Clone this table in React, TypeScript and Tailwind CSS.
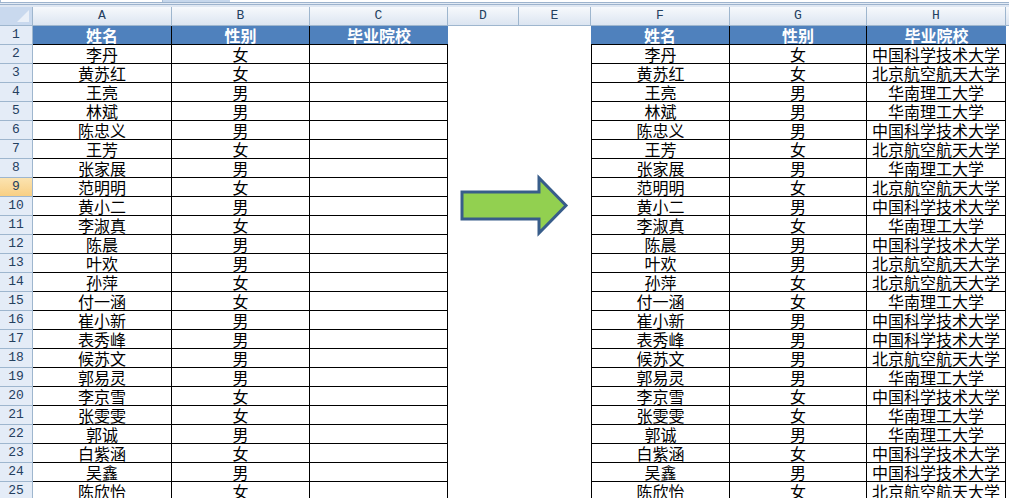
import React from 'react';

const rows: [string, string, string][] = [
  ['李丹', '女', '中国科学技术大学'],
  ['黄苏红', '女', '北京航空航天大学'],
  ['王亮', '男', '华南理工大学'],
  ['林斌', '男', '华南理工大学'],
  ['陈忠义', '男', '中国科学技术大学'],
  ['王芳', '女', '北京航空航天大学'],
  ['张家展', '男', '华南理工大学'],
  ['范明明', '女', '北京航空航天大学'],
  ['黄小二', '男', '中国科学技术大学'],
  ['李淑真', '女', '华南理工大学'],
  ['陈晨', '男', '中国科学技术大学'],
  ['叶欢', '男', '北京航空航天大学'],
  ['孙萍', '女', '北京航空航天大学'],
  ['付一涵', '女', '华南理工大学'],
  ['崔小新', '男', '中国科学技术大学'],
  ['表秀峰', '男', '中国科学技术大学'],
  ['候苏文', '男', '北京航空航天大学'],
  ['郭易灵', '男', '华南理工大学'],
  ['李京雪', '女', '中国科学技术大学'],
  ['张雯雯', '女', '华南理工大学'],
  ['郭诚', '男', '华南理工大学'],
  ['白紫涵', '女', '中国科学技术大学'],
  ['吴鑫', '男', '中国科学技术大学'],
  ['陈欣怡', '女', '北京航空航天大学'],
];

// column letters with their pixel widths
const cols: [string, number][] = [
  ['A', 139], ['B', 138], ['C', 138], ['D', 71], ['E', 72],
  ['F', 139], ['G', 137], ['H', 139],
];

const cjk = "font-['Noto_Sans_CJK_SC',sans-serif]";
const mono = "font-['Liberation_Mono',monospace]";

const RowHead: React.FC<{ n: number }> = ({ n }) => (
  <div
    className={`w-[33px] shrink-0 h-full flex items-center justify-center border-r border-b border-[#9eb6ce] text-[13px] leading-[18px] font-normal text-[#24405f] ${mono} ${
      n === 9 ? 'bg-linear-to-b from-[#fbe3b0] to-[#f8cf83]' : 'bg-[#e4ecf7]'
    }`}
  >
    {n}
  </div>
);

const Cell: React.FC<{ w: string; extra?: string; children?: React.ReactNode }> = ({ w, extra = '', children }) => (
  <div className={`${w} shrink-0 h-full flex items-center justify-center whitespace-nowrap overflow-hidden leading-[18px] ${extra}`}>
    {children}
  </div>
);

export default function App() {
  return (
    <div className="w-[1009px] h-[498px] overflow-hidden bg-white relative">
      {/* bottom edge of formula bar */}
      <div className="h-[2px] flex">
        <div className="w-[163px] border-x border-[#a9bdd5] bg-white" />
        <div className="w-[67px] bg-[#c6d7ec]" />
        <div className="flex-1 bg-white" />
      </div>
      <div className="h-[1px] bg-[#9db3cd]" />
      <div className="h-[1px] bg-[#e3ebf5]" />
      <div className="h-[1px] bg-[#9db3cd]" />
      <div className="h-[2px] bg-[#dfe7f2]" />

      {/* column header */}
      <div className="h-[19px] flex">
        <div className="w-[33px] shrink-0 h-full border-r border-b border-[#9eb6ce] bg-[#c9d9ee] relative">
          <svg className="absolute right-[3px] bottom-[3px]" width="12" height="12" viewBox="0 0 12 12">
            <polygon points="0,12 12,12 12,0" fill="#eaf0f8" />
          </svg>
        </div>
        {cols.map(([c, w]) => (
          <div
            key={c}
            style={{ width: w }}
            className={`shrink-0 h-full flex items-center justify-center border-r border-b border-[#9eb6ce] bg-linear-to-b from-[#f7f9fc] to-[#dce5f1] text-[13px] leading-[18px] text-[#24405f] ${mono}`}
          >
            {c}
          </div>
        ))}
        <div className="flex-1 h-full border-b border-[#9eb6ce] bg-linear-to-b from-[#f7f9fc] to-[#dce5f1]" />
      </div>

      {/* row 1: table headers */}
      <div className={`h-[19px] flex text-[16px] font-bold text-white ${cjk}`}>
        <RowHead n={1} />
        <Cell w="w-[139px]" extra="bg-[#4f81bd] border-r border-b border-black">姓名</Cell>
        <Cell w="w-[138px]" extra="bg-[#4f81bd] border-r border-b border-black">性别</Cell>
        <Cell w="w-[138px]" extra="bg-[#4f81bd] border-b border-black">毕业院校</Cell>
        <Cell w="w-[71px]" />
        <Cell w="w-[72px]" />
        <Cell w="w-[139px]" extra="bg-[#4f81bd] border-r border-b border-black">姓名</Cell>
        <Cell w="w-[137px]" extra="bg-[#4f81bd] border-r border-b border-black">性别</Cell>
        <Cell w="w-[139px]" extra="bg-[#4f81bd] border-b border-black">毕业院校</Cell>
        <div className="flex-1" />
      </div>

      {rows.map(([name, sex, school], i) => (
        <div key={i} className={`h-[19px] flex text-[16px] text-black ${cjk}`}>
          <RowHead n={i + 2} />
          <Cell w="w-[139px]" extra="border-r border-b border-black">{name}</Cell>
          <Cell w="w-[138px]" extra="border-r border-b border-black">{sex}</Cell>
          <Cell w="w-[138px]" extra="border-r border-b border-black" />
          <Cell w="w-[71px]" />
          <Cell w="w-[72px]" />
          <Cell w="w-[139px]" extra="border-l border-r border-b border-black">{name}</Cell>
          <Cell w="w-[137px]" extra="border-r border-b border-black">{sex}</Cell>
          <Cell w="w-[139px]" extra="border-r border-b border-black">{school}</Cell>
          <div className="flex-1" />
        </div>
      ))}

      {/* block arrow shape floating over columns D/E */}
      <svg className="absolute left-[455px] top-[170px]" width="120" height="70" viewBox="455 170 120 70">
        <polygon
          points="462,192 539,192 539,178 566,205.5 539,233 539,219 462,219"
          fill="#92d050"
          stroke="#385d8a"
          strokeWidth="3"
        />
      </svg>
    </div>
  );
}
